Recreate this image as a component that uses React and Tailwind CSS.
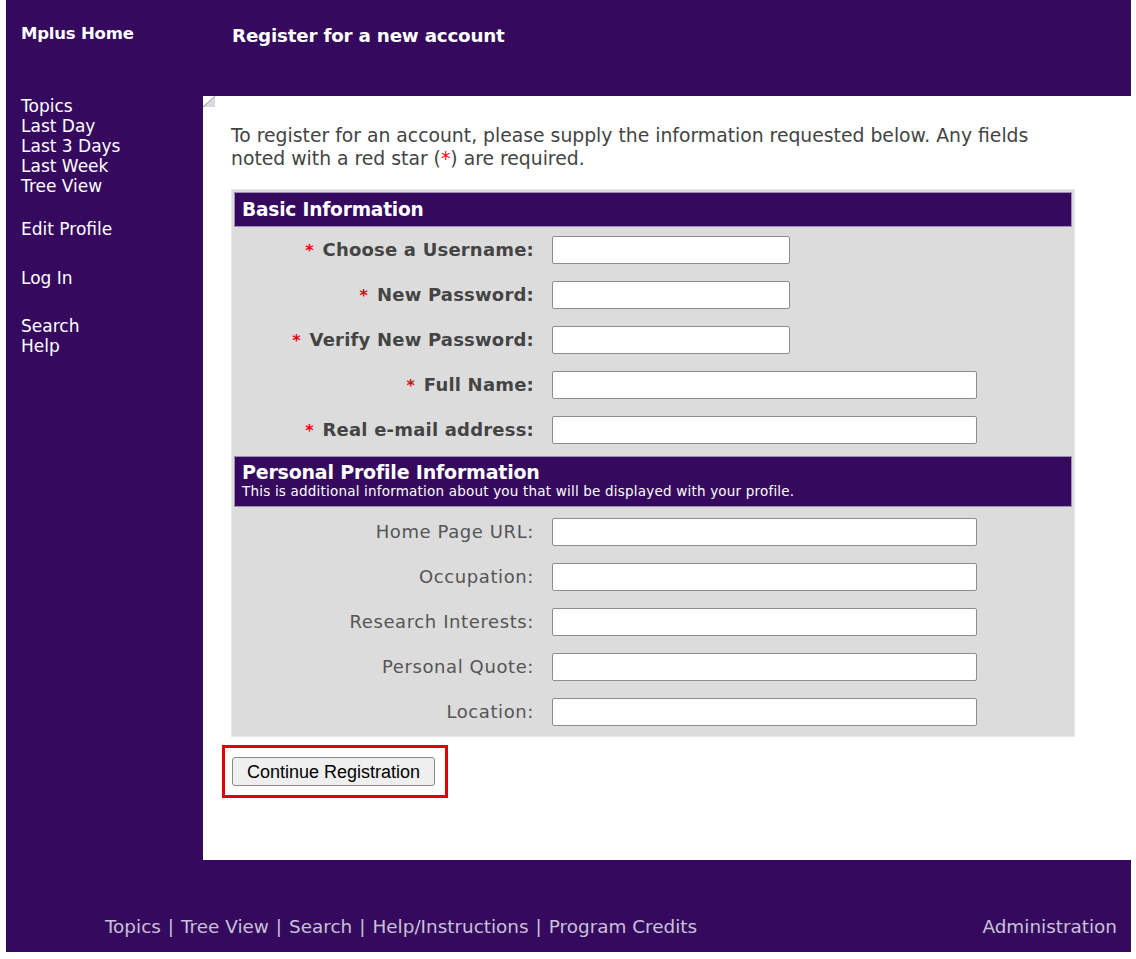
import React from 'react';

const NAV_GROUPS = [
    { gap: '', items: ['Topics', 'Last Day', 'Last 3 Days', 'Last Week', 'Tree View'] },
    { gap: 'mt-[23px]', items: ['Edit Profile'] },
    { gap: 'mt-[29px]', items: ['Log In'] },
    { gap: 'mt-[28px]', items: ['Search', 'Help'] },
];

const BASIC_FIELDS = [
    { label: 'Choose a Username:', short: true },
    { label: 'New Password:', short: true },
    { label: 'Verify New Password:', short: true },
    { label: 'Full Name:' },
    { label: 'Real e-mail address:' },
];

const PROFILE_FIELDS = ['Home Page URL:', 'Occupation:', 'Research Interests:', 'Personal Quote:', 'Location:'];

const FOOTER_LINKS = ['Topics', 'Tree View', 'Search', 'Help/Instructions', 'Program Credits'];

function FieldRow({ children, short }) {
    return (
        <div className="flex items-center h-[45px]">
            <div className="w-[300px] text-right whitespace-nowrap">{children}</div>
            <div className="pl-[18px]">
                <div className={`h-[28px] bg-white border border-[#8d8d8d] rounded-[2px] ${short ? 'w-[238px]' : 'w-[425px]'}`} />
            </div>
        </div>
    );
}

export default function App() {
    return (
        <div className="w-[1136px] h-[959px] bg-white overflow-hidden" style={{ fontFamily: '"DejaVu Sans", Verdana, sans-serif' }}>
            <div className="ml-[6px] w-[1125px] h-[952px] bg-[#350a5e] flex flex-col">
                <div className="flex">
                    {/* sidebar */}
                    <div className="w-[197px] shrink-0 pl-[15px] text-white">
                        <div className="pt-[22px] h-[96px] font-bold text-[16.5px] tracking-[-0.2px]">Mplus Home</div>
                        <div className="text-[17px] leading-[20px]">
                            {NAV_GROUPS.map((group, i) => (
                                <div key={i} className={group.gap}>
                                    {group.items.map(item => (
                                        <div key={item}>{item}</div>
                                    ))}
                                </div>
                            ))}
                        </div>
                    </div>

                    {/* main column */}
                    <div className="flex-1">
                        <div className="h-[96px] pl-[29px] pt-[22px] text-white font-bold text-[18.3px] tracking-[-0.2px]">
                            Register for a new account
                        </div>
                        <div className="relative bg-white h-[764px] pl-[28px] pt-[28px]">
                            <svg className="absolute left-0 top-0" width="13" height="12" viewBox="0 0 13 12">
                                <polygon points="0,11 12,0 12,11" fill="#d8d8e0" />
                                <line x1="0" y1="11" x2="12" y2="0" stroke="#9a9aa8" strokeWidth="1" />
                            </svg>
                            <p className="w-[820px] text-[18.8px] leading-[23px] text-[#444] mb-[19px]">
                                To register for an account, please supply the information requested below. Any fields noted with a red star (<span className="text-red-600">*</span>) are required.
                            </p>

                            <div className="w-[844px] bg-[#dcdcdc] border border-[#e6e6e6] p-[2px] text-[#444]">
                                <div className="bg-[#350a5e] h-[35px] pl-[7px] flex items-center text-white font-bold text-[18.6px] tracking-[-0.2px] border border-[#9b8fb0]">
                                    Basic Information
                                </div>
                                {BASIC_FIELDS.map(f => (
                                    <FieldRow key={f.label} short={f.short}>
                                        <span className="text-red-600 font-bold mr-[9px] text-[16px]">*</span>
                                        <span className="font-bold text-[18px] tracking-[0.2px]">{f.label}</span>
                                    </FieldRow>
                                ))}
                                <div className="bg-[#350a5e] h-[51px] mt-[4px] pl-[7px] pt-[5px] text-white border border-[#9b8fb0]">
                                    <div className="font-bold text-[19px] leading-[21px] tracking-[-0.2px]">Personal Profile Information</div>
                                    <div className="text-[13.5px] leading-[17px] tracking-[0.2px]">This is additional information about you that will be displayed with your profile.</div>
                                </div>
                                <div className="pt-[2px]">
                                    {PROFILE_FIELDS.map(label => (
                                        <FieldRow key={label}>
                                            <span className="text-[18px] text-[#555] tracking-[0.6px]">{label}</span>
                                        </FieldRow>
                                    ))}
                                </div>
                            </div>

                            <div className="mt-[8px] ml-[-9px] w-[226px] h-[53px] border-[3px] border-[#e00000] pl-[7px] pt-[9px]">
                                <button className="h-[29px] w-[203px] bg-[#efefef] border border-[#8a8a8a] rounded-[3px] text-[18px] text-black leading-none" style={{ fontFamily: '"Liberation Sans", Arial, sans-serif' }}>
                                    Continue Registration
                                </button>
                            </div>
                        </div>
                    </div>
                </div>

                {/* footer */}
                <div className="flex-1 flex items-end justify-between pb-[11px] pl-[99px] pr-[14px] text-[#c9c1d9] text-[18.4px]">
                    <div>
                        {FOOTER_LINKS.map((link, i) => (
                            <span key={link}>
                                {i > 0 && <span className="mx-[7px]">|</span>}
                                {link}
                            </span>
                        ))}
                    </div>
                    <div>Administration</div>
                </div>
            </div>
        </div>
    );
}
